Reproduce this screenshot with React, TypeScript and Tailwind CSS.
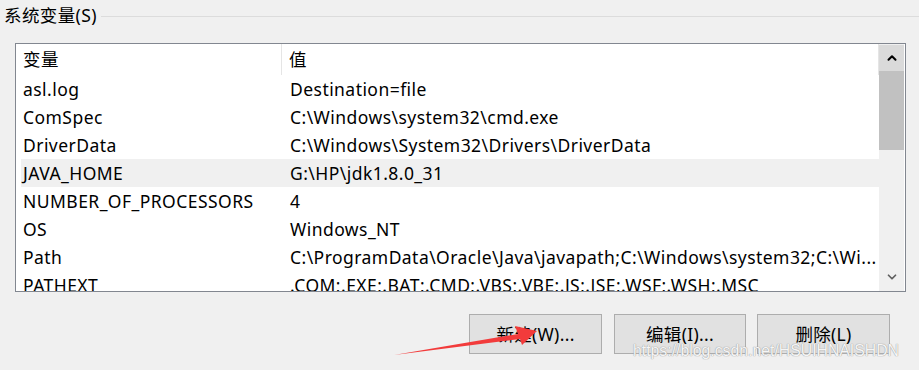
import { ChevronUp, ChevronDown } from 'lucide-react';

const FONT = '"Noto Sans", "Noto Sans CJK SC", sans-serif';

const ROWS: [string, string][] = [
    ['asl.log', 'Destination=file'],
    ['ComSpec', 'C:\\Windows\\system32\\cmd.exe'],
    ['DriverData', 'C:\\Windows\\System32\\Drivers\\DriverData'],
    ['JAVA_HOME', 'G:\\HP\\jdk1.8.0_31'],
    ['NUMBER_OF_PROCESSORS', '4'],
    ['OS', 'Windows_NT'],
    ['Path', 'C:\\ProgramData\\Oracle\\Java\\javapath;C:\\Windows\\system32;C:\\Wi...'],
    ['PATHEXT', '.COM;.EXE;.BAT;.CMD;.VBS;.VBE;.JS;.JSE;.WSF;.WSH;.MSC'],
];

function WinButton({ label, w }: { label: string; w: string }) {
    return (
        <button className={'h-[40px] bg-[#e1e1e1] border border-[#adadad] text-[17.5px] tracking-[0.3px] text-black flex items-center justify-center ' + w}>
            {label}
        </button>
    );
}

export default function App() {
    return (
        <div
            className="w-[919px] h-[370px] bg-[#f0f0f0] relative overflow-hidden text-black"
            style={{ fontFamily: FONT }}
        >
            {/* group title */}
            <div className="h-8 flex items-center pl-1">
                <span className="text-[17.5px] leading-none tracking-[0.4px]">系统变量(S)</span>
                <div className="flex-1 h-px bg-[#dcdcdc] ml-[4px]" />
            </div>

            {/* list view */}
            <div className="ml-[15px] mt-[11px] w-[891px] h-[249px] border border-[#828790] bg-white flex overflow-hidden">
                <div className="w-[863px] flex flex-col text-[17.5px] tracking-[0.45px]">
                    <div className="h-[31px] flex items-stretch shrink-0">
                        <div className="w-[266px] flex items-center pl-[7px] border-r border-[#e5e5e5]">变量</div>
                        <div className="flex-1 flex items-center pl-[7px] border-r border-[#e5e5e5]">值</div>
                    </div>
                    <div className="ml-[5px] flex flex-col">
                        {ROWS.map(([k, v]) => (
                            <div
                                key={k}
                                className={
                                    'h-[28px] flex items-center whitespace-nowrap shrink-0 ' +
                                    (k === 'JAVA_HOME' ? 'bg-[#f0f0f0]' : '')
                                }
                            >
                                <div className="w-[267px] pl-[2px]">{k}</div>
                                <div className="flex-1 pl-[2px] overflow-hidden">{v}</div>
                            </div>
                        ))}
                    </div>
                </div>

                {/* scrollbar */}
                <div className="w-[25px] bg-[#f0f0f0] flex flex-col pt-px pb-px">
                    <div className="h-[26px] bg-[#dadada] flex items-center justify-center">
                        <ChevronUp className="w-[14px] h-[14px] text-black" strokeWidth={3.5} />
                    </div>
                    <div className="h-[79px] bg-[#c1c1c1]" />
                    <div className="flex-1" />
                    <div className="h-[26px] flex items-center justify-center">
                        <ChevronDown className="w-[14px] h-[14px] text-[#606060]" strokeWidth={3} />
                    </div>
                </div>
                <div className="w-px" />
            </div>

            {/* buttons */}
            <div className="flex justify-end pr-[29px] mt-[22px]">
                <WinButton label="新建(W)..." w="w-[133px]" />
                <div className="w-[12px]" />
                <WinButton label="编辑(I)..." w="w-[132px]" />
                <div className="w-[11px]" />
                <WinButton label="删除(L)" w="w-[133px]" />
            </div>

            {/* red annotation arrow */}
            <svg className="absolute left-0 top-0 pointer-events-none" width="919" height="370">
                <polygon
                    points="394,355 518,334 515,326 537,331 522,345 520,339"
                    fill="#f23b3b"
                />
            </svg>

            {/* watermark */}
            <div
                className="absolute left-[633px] top-[343px] text-[15.8px] leading-none text-white/90 pointer-events-none whitespace-nowrap [text-shadow:0_0_1px_#9a9a9a,0_0_1px_#9a9a9a]"
                style={{ fontFamily: '"Liberation Sans", Arial, sans-serif' }}
            >
                https://blog.csdn.net/HSUIHNAISHDN
            </div>
        </div>
    );
}
